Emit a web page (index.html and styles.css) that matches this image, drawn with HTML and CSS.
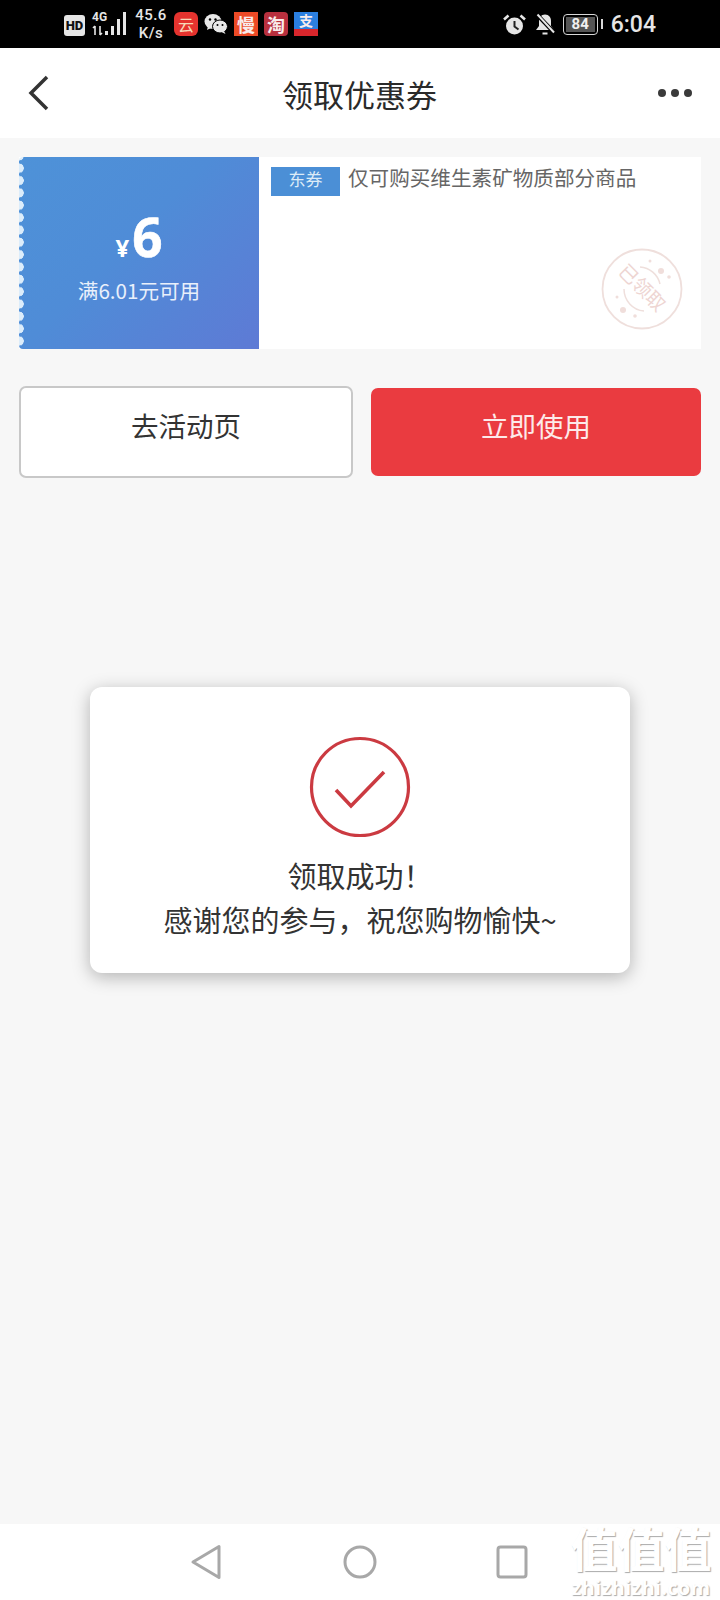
FILE: index.html
```html
<!DOCTYPE html>
<html>
<head>
    <title>领取优惠券</title>
    <link rel="stylesheet" href="styles.css">
</head>
<body>
    <div class="status-bar">
        <div class="hd-badge">HD</div>
        <div class="signal">
            <div class="signal-text">4G</div>
            <svg class="signal-bars" width="37" height="26" viewBox="0 0 37 26">
                <path d="M3 15v9M3 15l-2 2M8 15v9M8 24l2-2" fill="none" stroke="#e6e6e6" stroke-width="1.600"/>
                <rect x="13" y="20" width="3" height="4" fill="#e6e6e6"/>
                <rect x="19" y="15" width="3" height="9" fill="#e6e6e6"/>
                <rect x="25" y="8" width="3" height="16" fill="#e6e6e6"/>
                <rect x="31" y="1" width="3" height="23" fill="#e6e6e6"/>
            </svg>
        </div>
        <div class="net-speed">
            <span>45.6</span>
            <span>K/s</span>
        </div>
        <div class="app-icons">
            <div class="app-icon app-yun">云</div>
            <svg class="app-wechat" width="24" height="22" viewBox="0 0 24 22">
                <ellipse cx="9" cy="8.500" rx="8.500" ry="7.500" fill="#e8e8e8"/>
                <path d="M4 13l-1 4 4-2z" fill="#e8e8e8"/>
                <ellipse cx="16" cy="13.500" rx="7.500" ry="6.500" fill="#e8e8e8" stroke="#000" stroke-width="1"/>
                <path d="M20 18l1.500 3-4-2z" fill="#e8e8e8"/>
                <circle cx="6" cy="6.500" r="1.200" fill="#000"/>
                <circle cx="11.500" cy="6.500" r="1.200" fill="#000"/>
                <circle cx="13.500" cy="12" r="1" fill="#000"/>
                <circle cx="18.500" cy="12" r="1" fill="#000"/>
            </svg>
            <div class="app-icon app-man">慢</div>
            <div class="app-icon app-tao">淘</div>
            <div class="app-icon app-zhi">
                <span>支</span>
                <i class="zhi-strip"></i>
            </div>
        </div>
        <div class="status-right">
            <svg class="alarm" width="23" height="21" viewBox="0 0 23 21">
                <circle cx="11.500" cy="12" r="8.500" fill="#e6e6e6"/>
                <path d="M11.500 7v5.500l4 3" fill="none" stroke="#222" stroke-width="2"/>
                <path d="M1 5.500L5.500 1.500M22 5.500L17.500 1.500" fill="none" stroke="#e6e6e6" stroke-width="2.600"/>
            </svg>
            <svg class="bell" width="22" height="23" viewBox="0 0 22 23">
                <path d="M11 1.500c-4 0-6 3-6 6.500v5L2 17h18l-3-4V8c0-3.500-2-6.500-6-6.500z" fill="#e6e6e6"/>
                <path d="M8.500 20.500h5" stroke="#e6e6e6" stroke-width="2"/>
                <path d="M2.500 1l18 19" stroke="#000" stroke-width="4"/>
                <path d="M3.500 1.500l16.500 18" stroke="#e6e6e6" stroke-width="2"/>
            </svg>
            <div class="battery">
                <div class="battery-body"><span>84</span></div>
                <i class="battery-tip"></i>
            </div>
            <div class="clock">6:04</div>
        </div>
    </div>

    <div class="nav-bar">
        <svg class="nav-back" width="22" height="36" viewBox="0 0 22 36">
            <path d="M20 2L4 18l16 16" fill="none" stroke="#333" stroke-width="3.500"/>
        </svg>
        <h1 class="nav-title">领取优惠券</h1>
        <div class="nav-more">
            <i></i><i></i><i></i>
        </div>
    </div>

    <div class="content">
        <div class="coupon">
            <div class="coupon-left">
                <div class="coupon-price"><span class="yen">¥</span><span class="amount">6</span></div>
                <div class="coupon-limit">满6.01元可用</div>
            </div>
            <div class="coupon-right">
                <div class="coupon-desc">
                    <span class="coupon-tag">东券</span>
                    <span class="coupon-text">仅可购买维生素矿物质部分商品</span>
                </div>
                <svg class="stamp" width="84" height="84" viewBox="0 0 84 84">
                    <circle cx="42" cy="42" r="39.500" fill="none" stroke="#efdfdc" stroke-width="1.800"/>
                    <path d="M40 20a22 22 0 0 1 20 17M24 42a22 22 0 0 0 20 22" fill="none" stroke="#efdfdc" stroke-width="1.500"/>
                    <circle cx="50" cy="14" r="1.500" fill="#f0dedb"/>
                    <circle cx="61" cy="24" r="3" fill="#f0dedb"/>
                    <circle cx="69" cy="30" r="1.800" fill="#f0dedb"/>
                    <circle cx="17" cy="50" r="1.500" fill="#f0dedb"/>
                    <circle cx="23" cy="63" r="3" fill="#f0dedb"/>
                    <circle cx="35" cy="69" r="1.800" fill="#f0dedb"/>
                    <text class="stamp-text" x="42" y="47.500" text-anchor="middle" transform="rotate(45 42 41)">已领取</text>
                </svg>
            </div>
        </div>

        <div class="actions">
            <div class="btn btn-outline">去活动页</div>
            <div class="btn btn-primary">立即使用</div>
        </div>
    </div>

    <div class="toast">
        <svg class="toast-icon" width="104" height="104" viewBox="0 0 104 104">
            <circle cx="52" cy="52" r="48.500" fill="none" stroke="#cb3a41" stroke-width="3.200"/>
            <path d="M28 55l15 16 33-34" fill="none" stroke="#cb3a41" stroke-width="3.600"/>
        </svg>
        <p>领取成功！</p>
        <p>感谢您的参与，祝您购物愉快~</p>
    </div>

    <div class="bottom-bar">
        <svg class="soft-key" width="32" height="38" viewBox="0 0 32 38">
            <path d="M29 3.500v31L3 19z" fill="none" stroke="#a8a8a8" stroke-width="3" stroke-linejoin="round"/>
        </svg>
        <svg class="soft-key" width="36" height="36" viewBox="0 0 36 36">
            <circle cx="18" cy="18" r="15" fill="none" stroke="#a8a8a8" stroke-width="3"/>
        </svg>
        <svg class="soft-key soft-key-recent" width="32" height="34" viewBox="0 0 32 34">
            <rect x="2" y="2" width="28" height="30" rx="2.500" fill="none" stroke="#a8a8a8" stroke-width="3"/>
        </svg>
    </div>

    <div class="watermark">
        <div class="watermark-logo">值值值</div>
        <div class="watermark-url">zhizhizhi.com</div>
    </div>
</body>
</html>
```

FILE: styles.css
```css
/* Base styles */
* {
    margin: 0;
    padding: 0;
    box-sizing: border-box;
}

body {
    position: relative;
    display: flex;
    flex-direction: column;
    width: 720px;
    height: 1600px;
    overflow: hidden;
    background-color: #f7f7f7;
    font-family: "Noto Sans CJK SC", "Noto Sans", sans-serif;
    color: #333;
}

/* Status bar */
.status-bar {
    display: flex;
    align-items: center;
    height: 48px;
    padding: 0 64px;
    background-color: #000;
    color: #e6e6e6;
    font-family: Roboto, sans-serif;
}

.hd-badge {
    width: 21px;
    height: 21px;
    margin-top: 2px;
    border-radius: 3px;
    background-color: #e6e6e6;
    color: #111;
    font-size: 13px;
    font-weight: 900;
    line-height: 21px;
    text-align: center;
}

.signal {
    position: relative;
    width: 42px;
    height: 26px;
    margin-left: 6px;
}

.signal-text {
    position: absolute;
    top: -1px;
    left: 1px;
    font-size: 12px;
    font-weight: 700;
    line-height: 14px;
}

.signal-bars {
    position: absolute;
    top: 0;
    left: 1px;
}

.net-speed {
    display: flex;
    flex-direction: column;
    width: 32px;
    margin-left: 2px;
    font-size: 15px;
    font-weight: 500;
    line-height: 18px;
    letter-spacing: 0.5px;
    text-align: center;
}

.app-icons {
    display: flex;
    align-items: center;
    gap: 6px;
    margin-left: 7px;
}

.app-icon {
    position: relative;
    width: 24px;
    height: 24px;
    border-radius: 4px;
    color: #f8ecec;
    font-family: "Noto Sans CJK SC", sans-serif;
    font-size: 18px;
    font-weight: 700;
    line-height: 24px;
    text-align: center;
}

.app-yun {
    background-color: #e5332e;
    border-radius: 6px;
    color: #f6d9b8;
    font-size: 16px;
    font-weight: 400;
}

.app-man {
    background-color: #ec4a26;
    border-radius: 0;
}

.app-tao {
    background-color: #b8303e;
}

.app-zhi {
    background-color: #2b7fe0;
    border-radius: 0;
    font-size: 14px;
    line-height: 17px;
}

.app-zhi span {
    display: block;
}

.zhi-strip {
    position: absolute;
    left: 0;
    right: 0;
    bottom: 0;
    height: 7px;
    background-color: #d8262c;
}

.status-right {
    display: flex;
    align-items: center;
    margin-left: auto;
}

.bell {
    margin-left: 8px;
}

.battery {
    display: flex;
    align-items: center;
    margin-left: 7px;
}

.battery-body {
    width: 35px;
    height: 21px;
    padding: 2px;
    border: 1.5px solid #d8d8d8;
    border-radius: 4px;
}

.battery-body span {
    display: block;
    height: 100%;
    background-color: #555;
    color: #f0f0f0;
    font-size: 15px;
    font-weight: 700;
    line-height: 14px;
    text-align: center;
}

.battery-tip {
    width: 2px;
    height: 10px;
    margin-left: 3px;
    background-color: #d8d8d8;
}

.clock {
    margin-top: 2px;
    margin-left: 8px;
    font-size: 23px;
    font-weight: 500;
    line-height: 26px;
}

/* Nav bar */
.nav-bar {
    display: grid;
    grid-template-columns: 1fr auto 1fr;
    align-items: center;
    height: 90px;
    padding: 0 28px 0 27px;
    background-color: #fff;
}

.nav-title {
    font-size: 31px;
    font-weight: 400;
    color: #2a2a2a;
}

.nav-more {
    display: flex;
    justify-content: flex-end;
    gap: 5px;
}

.nav-more i {
    width: 8px;
    height: 8px;
    border-radius: 50%;
    background-color: #3a3a3a;
}

/* Coupon */
.content {
    flex: 1;
    padding: 19px 19px 0;
}

.coupon {
    display: flex;
    height: 192px;
    background-color: #fff;
}

.coupon-left {
    display: flex;
    flex-direction: column;
    align-items: center;
    width: 240px;
    padding-top: 48px;
    border-radius: 4px 0 0 4px;
    background:
        radial-gradient(circle at 0 50%, #dcedfb 4.5px, transparent 5px) 0 5px / 6px 12.35px repeat-y,
        linear-gradient(135deg, #4e92d8 0%, #4f8cd7 45%, #5e7ad5 100%);
    color: #fff;
}

.coupon-price {
    display: flex;
    align-items: baseline;
    height: 64px;
    font-family: "Open Sans", sans-serif;
    font-weight: 700;
    line-height: 64px;
}

.yen {
    margin-right: 3px;
    font-size: 24px;
    font-weight: 700;
}

.amount {
    font-size: 53px;
    -webkit-text-stroke: 0.6px #fff;
}

.coupon-limit {
    margin-top: 6px;
    font-size: 20.6px;
    line-height: 30px;
    color: #e9f0fb;
}

.coupon-right {
    position: relative;
    flex: 1;
    padding: 10px 12px;
}

.coupon-desc {
    display: flex;
    align-items: flex-start;
}

.coupon-tag {
    width: 69px;
    height: 29px;
    background-color: #4b8fd6;
    color: #dcebf7;
    font-size: 17px;
    line-height: 24px;
    text-align: center;
}

.coupon-text {
    margin-left: 8px;
    color: #666;
    font-size: 20.6px;
    line-height: 20px;
}

.stamp {
    position: absolute;
    right: 17px;
    bottom: 18px;
}

.stamp-text {
    font-size: 19px;
    fill: #eed5d2;
}

/* Buttons */
.actions {
    display: flex;
    align-items: center;
    gap: 18px;
    margin-top: 37px;
}

.btn {
    font-size: 27.5px;
    text-align: center;
}

.btn-outline {
    width: 334px;
    height: 92px;
    border: 2px solid #c8c8c8;
    border-radius: 7px;
    background-color: #fff;
    color: #333;
    line-height: 74px;
}

.btn-primary {
    width: 330px;
    height: 88px;
    border-radius: 7px;
    background-color: #ea3b40;
    color: #fdeaea;
    line-height: 74px;
}

/* Success toast */
.toast {
    position: absolute;
    top: 687px;
    left: 90px;
    width: 540px;
    height: 286px;
    padding-top: 48px;
    border-radius: 12px;
    background-color: #fff;
    box-shadow: 0 4px 18px rgba(0,0,0,0.28);
    text-align: center;
    font-size: 29px;
    line-height: 44px;
    color: #333;
}

.toast-icon {
    display: block;
    margin: 0 auto 14px;
}

/* Bottom bar */
.bottom-bar {
    display: flex;
    align-items: center;
    gap: 120px;
    height: 76px;
    padding-left: 190px;
    background-color: #fff;
}

.soft-key {
    flex-shrink: 0;
}

.soft-key-recent {
    margin-left: -2px;
}

/* Watermark */
.watermark {
    position: absolute;
    left: 570px;
    top: 1519px;
    width: 142px;
    color: #fff;
    text-align: center;
    text-shadow: 1px 1px 1px #aaa;
}

.watermark-logo {
    font-size: 47px;
    font-weight: 700;
    line-height: 56px;
    white-space: nowrap;
}

.watermark-url {
    margin-top: 3px;
    font-family: "Open Sans", sans-serif;
    font-size: 20px;
    font-weight: 700;
    line-height: 20px;
    letter-spacing: 0.3px;
}
```
